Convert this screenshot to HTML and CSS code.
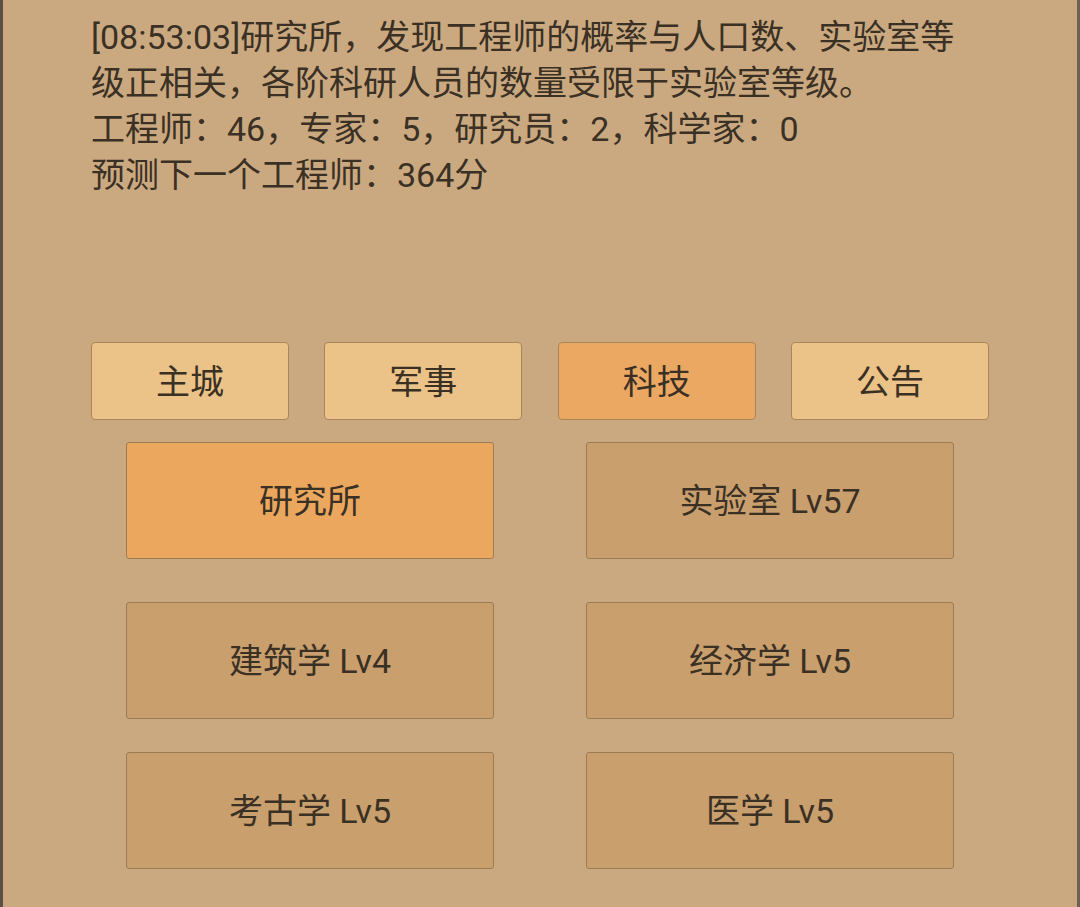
FILE: index.html
```html
<!DOCTYPE html>
<html lang="zh-CN">
<head>
<meta charset="utf-8">
<title>科技</title>
<link rel="stylesheet" href="styles.css">
</head>
<body>
<div class="frame">
  <div class="log">
    <p>[08:53:03]研究所，发现工程师的概率与人口数、实验室等级正相关，各阶科研人员的数量受限于实验室等级。</p>
    <p>工程师：46，专家：5，研究员：2，科学家：0</p>
    <p>预测下一个工程师：364分</p>
  </div>
  <nav class="tabs">
    <div class="tab">主城</div>
    <div class="tab">军事</div>
    <div class="tab active">科技</div>
    <div class="tab">公告</div>
  </nav>
  <div class="grid">
    <div class="row first">
      <div class="cell active">研究所</div>
      <div class="cell">实验室 Lv57</div>
    </div>
    <div class="row second">
      <div class="cell">建筑学 Lv4</div>
      <div class="cell">经济学 Lv5</div>
    </div>
    <div class="row third">
      <div class="cell">考古学 Lv5</div>
      <div class="cell">医学 Lv5</div>
    </div>
  </div>
</div>
</body>
</html>
```

FILE: styles.css
```css
html, body {
  margin: 0;
  padding: 0;
  height: 100%;
}
body {
  background: #caa980;
  font-family: Roboto, "Noto Sans CJK SC", sans-serif;
  color: #3a3024;
}
.frame {
  box-sizing: border-box;
  height: 907px;
  border-left: 3px solid #5b5048;
  border-right: 3px solid #6e6152;
  overflow: hidden;
}
.log {
  padding: 14px 0 0 88px;
  width: 960px;
  height: 342px;
  box-sizing: border-box;
}
.log p {
  margin: 0;
  font-size: 34px;
  line-height: 46px;
}
.tabs {
  display: flex;
  justify-content: space-between;
  width: 898px;
  margin-left: 88px;
}
.tab {
  box-sizing: border-box;
  width: 198px;
  height: 78px;
  padding-bottom: 3px;
  background: #ebc287;
  border: 1px solid #a8865a;
  border-radius: 4px;
  display: flex;
  align-items: center;
  justify-content: center;
  font-size: 34px;
}
.tab.active {
  background: #eba862;
}
.grid {
  margin-left: 123px;
  width: 828px;
}
.row {
  display: flex;
  justify-content: space-between;
}
.row.first { margin-top: 22px; }
.row.second { margin-top: 43px; }
.row.third { margin-top: 33px; }
.cell {
  box-sizing: border-box;
  width: 368px;
  height: 117px;
  padding-bottom: 4px;
  background: #c99f6e;
  border: 1px solid #9c7c55;
  border-radius: 3px;
  display: flex;
  align-items: center;
  justify-content: center;
  font-size: 34px;
}
.cell.active {
  background: #eba75e;
}
```
